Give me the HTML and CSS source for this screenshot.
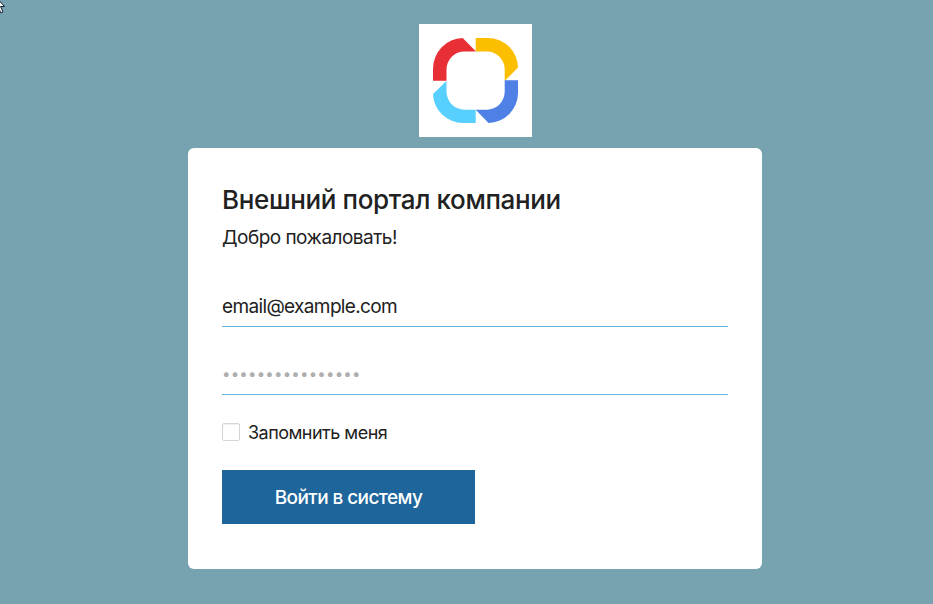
FILE: index.html
```html
<!DOCTYPE html>
<html lang="ru">
<head>
<meta charset="utf-8">
<title>Внешний портал компании</title>
<link rel="stylesheet" href="styles.css">
</head>
<body>
<svg class="cursor" width="6" height="15" viewBox="0 0 6 15"><path d="M-5 -4L4.500 6.500H.5L3 12L1 13L-1.500 8V-4Z" fill="#fff" stroke="#102030"/></svg>
<main class="page">
  <svg class="logo" width="113" height="113" viewBox="0 0 113 113">
    <rect width="113" height="113" fill="#fff"/>
    <path fill="#e92f36" d="M14 56.700V45A30 31 0 0 1 43.700 14L57 27.500H45.500A18 18 0 0 0 27.500 45.500V56.700Z"/>
    <path fill="#fbbf00" d="M56.700 14H69A30 30 0 0 1 99 43.500L85.700 57V45.500A18 18 0 0 0 67.700 27.500H56.700Z"/>
    <path fill="#4e80e6" d="M85.700 56.300H99V69A30 30 0 0 1 69.500 99L56.700 85.700H67.700A18 18 0 0 0 85.700 67.700Z"/>
    <path fill="#57cfff" d="M27.500 57V67.700A18 18 0 0 0 45.500 85.700H56.700V99H44A30 30 0 0 1 14 70Z"/>
  </svg>
  <form class="card">
    <h1 class="title">Внешний портал компании</h1>
    <p class="welcome">Добро пожаловать!</p>
    <input class="field" type="text" value="email@example.com" aria-label="Email">
    <div class="field password" role="textbox" aria-label="Пароль">••••••••••••••••</div>
    <label class="remember"><input class="check" type="checkbox"><span>Запомнить меня</span></label>
    <button class="submit" type="button">Войти в систему</button>
  </form>
</main>
</body>
</html>
```
FILE: styles.css
```css
* { box-sizing: border-box; }
body { margin: 0; height: 604px; overflow: hidden; background: #76a3af; color: #212121; font-family: Inter, sans-serif; }
.cursor { position: absolute; left: 0; top: 0; }
.page { width: 574px; margin-left: 188px; padding-top: 24px; display: flex; flex-direction: column; align-items: center; }
.logo { display: block; }
.card { width: 574px; height: 421px; margin-top: 11px; padding: 34px; background: #fff; border-radius: 6px; }
.title { margin: 0; font-size: 26px; line-height: 36px; font-weight: 550; letter-spacing: -.37px; white-space: nowrap; }
.welcome { margin: 5px 0 0; font-size: 19px; line-height: 30px; letter-spacing: -.52px; }
.field { display: block; width: 506px; height: 41px; margin: 33px 0 0; padding: 0; border: 0; border-bottom: 1px solid #5fb9df; background: transparent; color: #212121; font: 19px/40px Inter, sans-serif; letter-spacing: -.64px; outline: 0; }
.password { margin-top: 27px; color: #aeaeae; font-size: 15px; letter-spacing: .23px; }
.remember { display: flex; align-items: center; gap: 8px; height: 24px; margin-top: 25px; font-size: 18px; letter-spacing: -.52px; }
.check { appearance: none; width: 18px; height: 18px; margin: 0; border: 1px solid #d5d5d5; border-radius: 2px; box-shadow: inset 0 1px 1px #eee; }
.submit { display: block; width: 253px; height: 54px; margin-top: 26px; padding: 0; border: 0; background: #1e659b; color: #fff; font: 550 19px Inter, sans-serif; letter-spacing: -.58px; }
```
